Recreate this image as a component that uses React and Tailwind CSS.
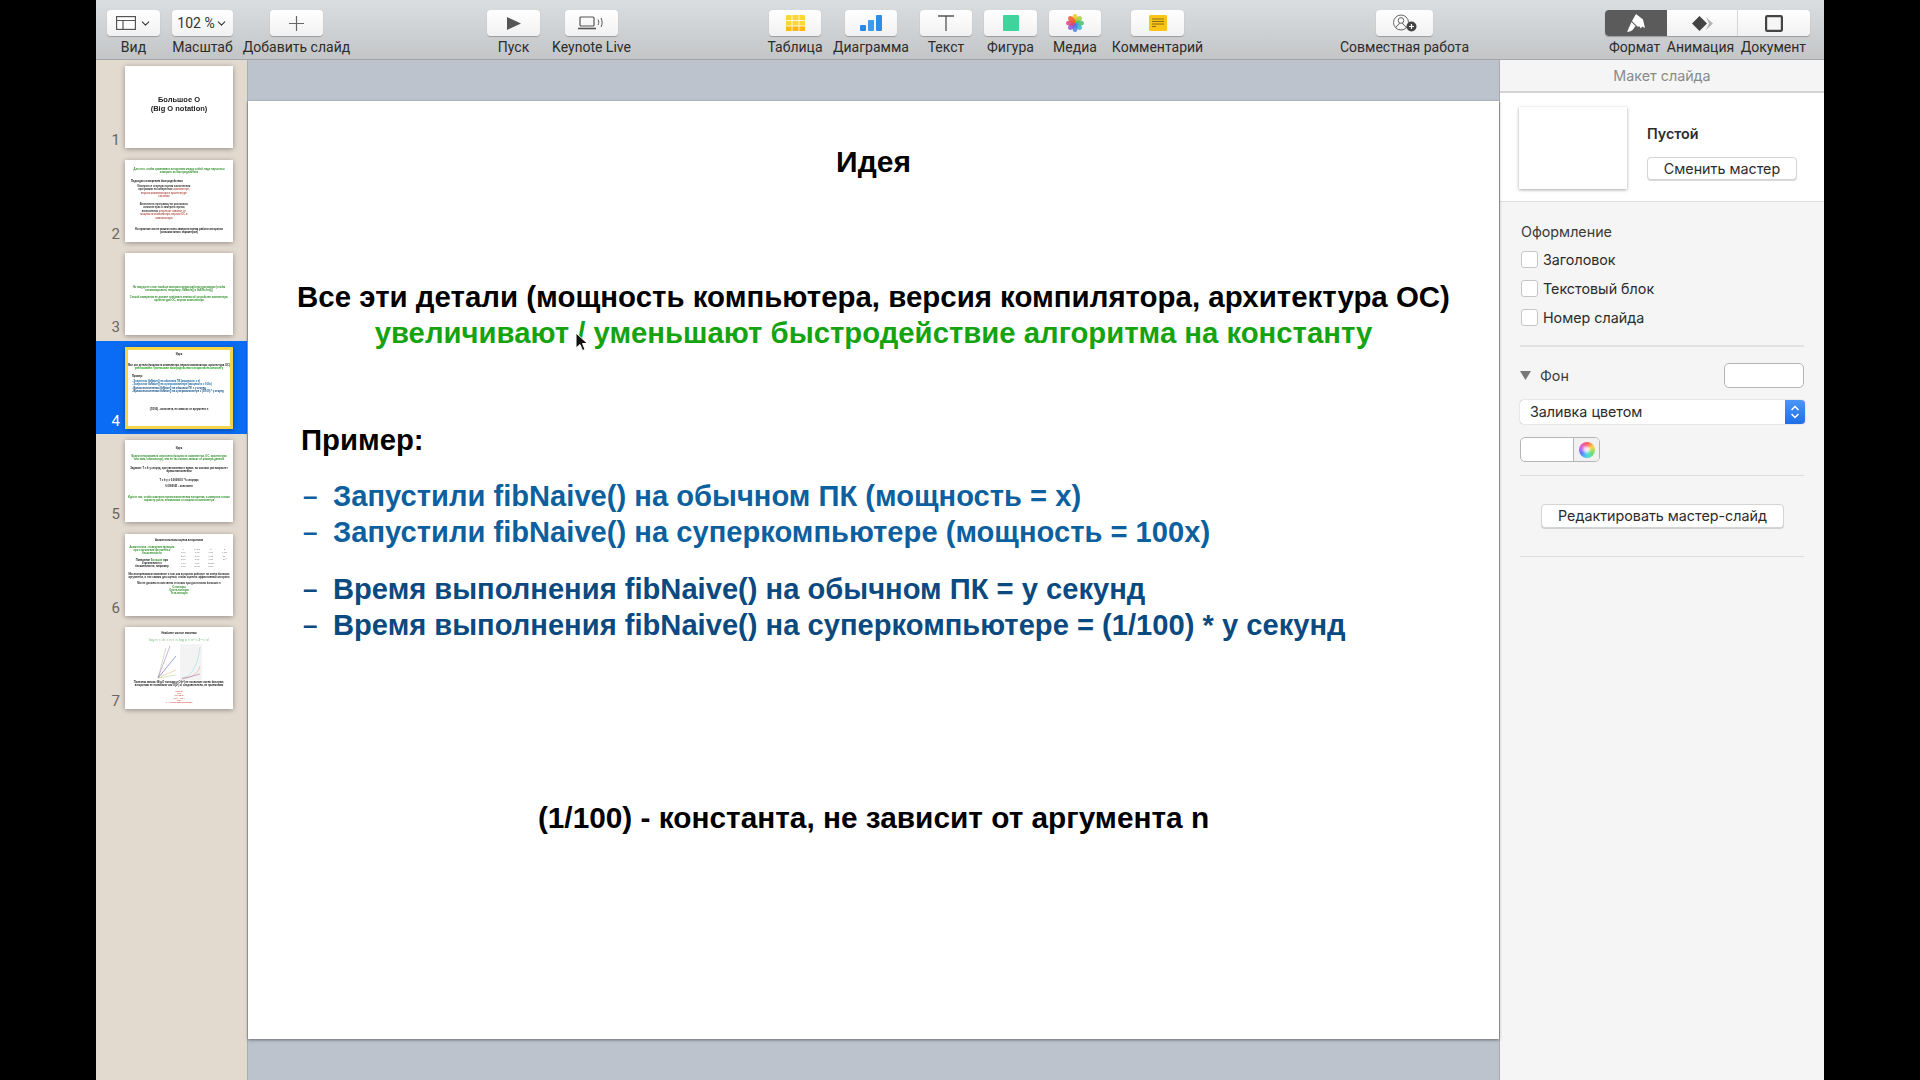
import React from "react";
import { ChevronDown } from "lucide-react";

const uiFont = "font-['Roboto',sans-serif]";

const IconView = () => (
  <svg width="20" height="14" viewBox="0 0 20 14" fill="none" stroke="#555" strokeWidth="1.2">
    <rect x="0.6" y="0.6" width="18.8" height="12.8" fill="#fff" />
    <path d="M0.6 4.5h18.8M7 4.5v8.9" />
  </svg>
);

const IconPlus = () => (
  <svg width="15" height="15" viewBox="0 0 15 15" stroke="#666" strokeWidth="1.2">
    <path d="M7.5 0v15M0 7.5h15" />
  </svg>
);

const IconPlay = () => (
  <svg width="14" height="13" viewBox="0 0 14 13">
    <path d="M0 0l14 6.5L0 13z" fill="#555" />
  </svg>
);

const IconLive = () => (
  <svg width="27" height="14" viewBox="0 0 27 14" fill="none" stroke="#555" strokeWidth="1.2">
    <rect x="2" y="1" width="14" height="9" rx="1" />
    <path d="M0 12.5h18" strokeWidth="1.6" />
    <path d="M20 3.5c1 2 1 3.5 0 5.5M23 2c1.5 3 1.5 6 0 9" strokeWidth="1" />
  </svg>
);

const IconTable = () => (
  <svg width="19" height="16" viewBox="0 0 19 16">
    <rect width="19" height="16" rx="1" fill="#fdd835" />
    <path d="M0 11h19v4a1 1 0 0 1-1 1H1a1 1 0 0 1-1-1z" fill="#fbb80f" />
    <path d="M6 0v16M13 0v16M0 5.5h19M0 11h19" stroke="#fff" strokeWidth="0.8" />
  </svg>
);

const IconChart = () => (
  <svg width="22" height="16" viewBox="0 0 22 16">
    <rect x="0" y="10" width="6" height="6" rx="1" fill="#2b86e6" />
    <rect x="8" y="5" width="6" height="11" rx="1" fill="#3d9bf0" />
    <rect x="16" y="0" width="6" height="16" rx="1" fill="#2b8ee8" />
  </svg>
);

const IconText = () => (
  <svg width="16" height="16" viewBox="0 0 16 16" fill="none" stroke="#555" strokeWidth="1.3">
    <path d="M0 1h16M8 1v15" />
  </svg>
);

const IconShape = () => <div className="w-[16px] h-[16px] rounded-[1px] bg-[#3ed49c]" />;

const IconMedia = () => {
  const petals = ["#f6c21c", "#a5cf3a", "#4cbf6a", "#35b5d0", "#4a7fe0", "#8a55d6", "#e0417a", "#f0582c"];
  return (
    <svg width="18" height="18" viewBox="-9 -9 18 18">
      {petals.map((c, i) => (
        <ellipse key={c} cx="0" cy="-4.5" rx="2.6" ry="4.5" fill={c} opacity="0.85" transform={`rotate(${i * 45})`} />
      ))}
    </svg>
  );
};

const IconComment = () => (
  <svg width="18" height="16" viewBox="0 0 18 16">
    <rect width="18" height="16" rx="1.5" fill="#fcc419" />
    <path d="M3 4h12M3 6.5h12M3 9h12M3 11.5h4" stroke="#8a6d10" strokeWidth="1" />
  </svg>
);

const IconCollab = () => (
  <svg width="24" height="18" viewBox="0 0 24 18" fill="none" stroke="#666" strokeWidth="1">
    <circle cx="8" cy="8.5" r="7.5" />
    <circle cx="8" cy="6.5" r="2.8" />
    <path d="M6.5 9c0 2-3 2-3.5 4.5M9.5 9c0 2 3 2 3.5 4.5" />
    <circle cx="18.5" cy="12.5" r="5" fill="#444" stroke="none" />
    <path d="M18.5 10v5M16 12.5h5" stroke="#fff" strokeWidth="1.2" />
  </svg>
);

const IconFormat = () => (
  <svg width="18" height="18" viewBox="0 0 18 18" fill="#fff">
    <path d="M9 0l7 5.5 2 8.5-3-1.5-1 2-2-2.5-1 1-6-6z" />
    <path d="M4.5 8l4 4-2.5 3.5C5 17 2 18 0 18c1-1 1-3 2-4.5z" />
  </svg>
);

const IconAnimation = () => (
  <svg width="21" height="15" viewBox="0 0 21 15">
    <path d="M7.5 0l7.5 7.5L7.5 15 0 7.5z" fill="#444" />
    <path d="M14 1l7 6.5-7 6.5 3-6.5z" fill="#b5b5b5" />
  </svg>
);

const IconDocument = () => (
  <svg width="18" height="17" viewBox="0 0 18 17" fill="#f6f6f6" stroke="#444" strokeWidth="2.2">
    <rect x="1.1" y="1.1" width="15.8" height="14.8" rx="1.2" />
  </svg>
);

const ToolButton = ({ label, width, margin, children }) => (
  <div className={`flex flex-col items-center ${width} ${margin}`}>
    <div className="w-full h-[26px] rounded-[4px] bg-gradient-to-b from-white to-[#f1f1f1] shadow-[0_1px_1px_rgba(0,0,0,0.25)] flex items-center justify-center">
      {children}
    </div>
    <span className="mt-[3px] text-[14px] leading-[16px] text-[#2c2c2c] whitespace-nowrap">{label}</span>
  </div>
);

const Toolbar = () => (
  <div className={`h-[60px] shrink-0 flex pt-[10px] pl-[11px] bg-gradient-to-b from-[#dbdee0] to-[#c3c5c7] border-b border-[#a3a5a7] ${uiFont}`}>
    <ToolButton label="Вид" width="w-[53px]" margin="ml-0">
      <IconView />
      <ChevronDown size={13} color="#333" strokeWidth={2} className="ml-[3px]" />
    </ToolButton>
    <ToolButton label="Масштаб" width="w-[61px]" margin="ml-[12px]">
      <span className="text-[14px] text-[#333]">102 %</span>
      <ChevronDown size={13} color="#333" strokeWidth={2} />
    </ToolButton>
    <ToolButton label="Добавить слайд" width="w-[53px]" margin="ml-[37px]">
      <IconPlus />
    </ToolButton>
    <ToolButton label="Пуск" width="w-[53px]" margin="ml-[164px]">
      <IconPlay />
    </ToolButton>
    <ToolButton label="Keynote Live" width="w-[53px]" margin="ml-[25px]">
      <IconLive />
    </ToolButton>
    <ToolButton label="Таблица" width="w-[52px]" margin="ml-[151px]">
      <IconTable />
    </ToolButton>
    <ToolButton label="Диаграмма" width="w-[52px]" margin="ml-[24px]">
      <IconChart />
    </ToolButton>
    <ToolButton label="Текст" width="w-[52px]" margin="ml-[23px]">
      <IconText />
    </ToolButton>
    <ToolButton label="Фигура" width="w-[53px]" margin="ml-[12px]">
      <IconShape />
    </ToolButton>
    <ToolButton label="Медиа" width="w-[52px]" margin="ml-[12px]">
      <IconMedia />
    </ToolButton>
    <ToolButton label="Комментарий" width="w-[53px]" margin="ml-[30px]">
      <IconComment />
    </ToolButton>
    <ToolButton label="Совместная работа" width="w-[57px]" margin="ml-[192px]">
      <IconCollab />
    </ToolButton>
    <div className="ml-[172px] flex flex-col">
      <div className="flex h-[26px] w-[205px] rounded-[4px] overflow-hidden bg-gradient-to-b from-white to-[#f1f1f1] shadow-[0_1px_1px_rgba(0,0,0,0.25)]">
        <div className="w-[62px] bg-[#5b5b5b] flex items-center justify-center"><IconFormat /></div>
        <div className="w-[71px] flex items-center justify-center border-r border-[#d5d5d5]"><IconAnimation /></div>
        <div className="w-[72px] flex items-center justify-center"><IconDocument /></div>
      </div>
      <div className="mt-[3px] flex justify-between text-[14px] leading-[16px] text-[#2c2c2c] whitespace-nowrap px-[4px]">
        <span>Формат</span>
        <span>Анимация</span>
        <span>Документ</span>
      </div>
    </div>
  </div>
);

const ThumbText = ({ className = "", children }) => (
  <p className={`text-center font-bold leading-[1.2] ${className}`}>{children}</p>
);

const Thumb1 = () => (
  <div className="h-full flex flex-col justify-center pb-[7px]">
    <ThumbText className="text-[7.5px] text-[#222]">Большое O<br />(Big O notation)</ThumbText>
  </div>
);

const Thumb2 = () => (
  <div className="h-full flex flex-col px-[6px] pt-[8px] text-[2.6px]">
    <ThumbText className="text-[#2f8f2a]">Для того, чтобы сравнивать алгоритмы между собой, надо научиться измерять их быстродействие</ThumbText>
    <p className="mt-[6px] font-bold text-[#111]">Подходы к измерению быстродействия</p>
    <ul className="w-[56%] ml-[6px] mt-[1px] text-center leading-[1.35] font-bold">
      <li className="text-[#333]">Измерить в секундах время выполнения программы на конкретном <span className="text-[#b5574c]">компьютере, версии компилятора и архитектуре системы</span></li>
      <li className="mt-[4px] text-[#333]">Выполнить программу на различных компьютерах и замерить время выполнения <span className="text-[#b5574c]">результат зависит от мощности компьютера, версии ОС и компилятора</span></li>
    </ul>
    <ThumbText className="mt-[8px] text-[#111]">Но практике мы не можем точно замерить время работы алгоритма (слишком много параметров)</ThumbText>
  </div>
);

const Thumb3 = () => (
  <div className="h-full flex flex-col justify-center px-[3px] text-[2.6px] text-[#2f8f2a] font-bold text-center leading-[1.2]">
    <p>Но никуда не стоит вообще замерять время работы программы (чтобы оптимизировать, например, fibNaive() и fibEfficient())</p>
    <p className="mt-[4px]">Способ измерения не должен требовать знания об устройстве компьютера, архитектуры ОС, версии компилятора</p>
  </div>
);

const Thumb4 = () => (
  <div className="h-full flex flex-col text-[2.6px] font-bold pt-[3px]">
    <ThumbText className="text-[#111]">Идея</ThumbText>
    <ThumbText className="mt-[8px] text-[#111]">Все эти детали (мощность компьютера, версия компилятора, архитектура ОС)</ThumbText>
    <ThumbText className="text-[#15a30f]">увеличивают / уменьшают быстродействие алгоритма на константу</ThumbText>
    <p className="ml-[4px] mt-[5px] text-[#111]">Пример:</p>
    <div className="ml-[4px] mt-[1px] text-[#0d5f9e] leading-[1.2]">
      <p>- Запустили fibNaive() на обычном ПК (мощность = x)</p>
      <p>- Запустили fibNaive() на суперкомпьютере (мощность = 100x)</p>
    </div>
    <div className="ml-[4px] mt-[1px] text-[#0b4a80] leading-[1.2]">
      <p>- Время выполнения fibNaive() на обычном ПК = y секунд</p>
      <p>- Время выполнения fibNaive() на суперкомпьютере = (1/100) * y секунд</p>
    </div>
    <ThumbText className="mt-[15px] text-[#111]">(1/100) - константа, не зависит от аргумента n</ThumbText>
  </div>
);

const Thumb5 = () => (
  <div className="h-full flex flex-col text-[2.6px] font-bold px-[2px] pt-[7px] text-center leading-[1.2]">
    <p className="text-[#111]">Идея</p>
    <p className="mt-[5px] text-[#2f8f2a]">Будем игнорировать константы (мощность компьютера, ОС, архитектура системы, компилятор), они не так сильно зависят от размера данных</p>
    <p className="mt-[6px] px-[3px] text-[#111]">Задание: T = k·y секунд, при увеличении n вдвое, во сколько раз возрастет время выполнения</p>
    <p className="mt-[5px] text-[#111]">T = k·y = 0.0000001 * k секунды</p>
    <p className="mt-[3px] text-[#111]">0.0000001 - константа</p>
    <p className="mt-[8px] text-[#2f8f2a]">Идея в том, чтобы измерять время выполнения алгоритма, а измерить только характер роста, независимо от мощности компьютера</p>
  </div>
);

const Thumb6 = () => (
  <div className="h-full flex flex-col text-[2.6px] font-bold pt-[5px] px-[2px] leading-[1.2]">
    <ThumbText className="text-[#111]">Асимптотическая оценка алгоритмов</ThumbText>
    <div className="flex mt-[4px]">
      <div className="w-[48%] text-center">
        <p className="text-[#2f8f2a]">Асимптотика - поведение функции при стремлении аргумента к бесконечности</p>
        <p className="mt-[4px] text-[#111]">Поведение <span className="text-[#2f8f2a]">Большое</span> при<br />стремлении n к<br />бесконечности, например</p>
      </div>
      <div className="flex-1 grid grid-cols-4 gap-x-[1px] text-[2px] text-[#666] font-normal text-center leading-[3.5px] mt-[2px]">
        {["n", "n log n", "n²", "2ⁿ", "1 сек", "1 сек", "1 сек", "1 сек", "1 сек", "1 сек", "1 сек", "10¹⁷", "1 сек", "1 сек", "1 сек", "10³⁰", "1 сек", "1 сек", "17 мин", "-", "1 сек", "20 сек", "12 дн", "-"].map((c, i) => (
          <span key={i}>{c}</span>
        ))}
      </div>
    </div>
    <ThumbText className="mt-[4px] text-[#222]">Мы воспринимаем замечание о том, как алгоритм работает на очень больших аргументах, и тем самым для оценки, чтобы оценить эффективный алгоритм</ThumbText>
    <ThumbText className="mt-[3px] text-[#222]">Мы не должны в константы и только при достаточно больших n</ThumbText>
    <ThumbText className="mt-[1px] text-[#2f8f2a]">O-нотация<br />Омега-нотация<br />Тета-нотация</ThumbText>
  </div>
);

const Thumb7 = () => (
  <div className="h-full flex flex-col text-[2.6px] font-bold pt-[5px] items-center leading-[1.2]">
    <p className="text-[#111]">Наиболее частые значения</p>
    <p className="mt-[3px] text-[3.5px] text-[#9ccc9c]">log n &lt; √n &lt; n &lt; n log n &lt; n² &lt; 2ⁿ &lt; n!</p>
    <svg width="46" height="36" viewBox="0 0 46 36" fill="none" strokeWidth="0.5" className="mt-[2px]">
      <rect x="24" y="0" width="22" height="36" fill="#f3f3f3" stroke="none" />
      <path d="M2 34L10 4" stroke="#a5c08a" />
      <path d="M2 34L14 2" stroke="#a060c0" />
      <path d="M2 34L20 12" stroke="#3c3cb8" />
      <path d="M2 34L20 26" stroke="#d8b070" />
      <path d="M2 34L20 31" stroke="#b0d080" />
      <path d="M26 34C36 33 42 20 44 3" stroke="#8fd8d8" />
      <path d="M26 34C36 34 42 30 44 22" stroke="#e0a060" />
      <path d="M26 35L44 30" stroke="#a060c0" />
    </svg>
    <p className="mt-[1px] px-[3px] text-center text-[#111]">Полезная запись: Big-O нотация и O(n²) не позволяет очень быстрые, алгоритмы не позволяют как O(2ⁿ) и, следовательно, не приемлемы</p>
    <p className="mt-[2px] text-center text-[2px] text-[#d9534f]">O(log n)<br />O(n)<br />O(n log n)<br />O(n²) - O(n³)<br />O(2ⁿ)<br />O = 1.0000000000000000000</p>
  </div>
);

const thumbs = [Thumb1, Thumb2, Thumb3, Thumb4, Thumb5, Thumb6, Thumb7];

const Sidebar = () => (
  <div className="w-[152px] shrink-0 bg-[#e2d9cf] border-r border-[#b0aca6] font-['Liberation_Sans',sans-serif]">
    {thumbs.map((Thumb, i) => {
      const active = i === 3;
      return (
        <div key={i} className={`h-[93.5px] flex items-start pt-[6px] ${active ? "bg-[#0a6cf5]" : ""}`}>
          <span className={`w-[24px] mt-[66px] text-right text-[15px] leading-[16px] font-['Roboto',sans-serif] ${active ? "text-white" : "text-[#666]"}`}>{i + 1}</span>
          <div className={`ml-[5px] w-[108px] h-[82px] bg-white overflow-hidden shadow-[0_1px_5px_rgba(0,0,0,0.35)] ${active ? "border-[3px] border-[#f4d54a]" : ""}`}>
            <div className="h-full blur-[0.3px]">
              <Thumb />
            </div>
          </div>
        </div>
      );
    })}
  </div>
);

const BulletLine = ({ children }) => (
  <p className="flex text-[29.15px]">
    <span className="w-[32px] pl-[2px] text-[26px]">–</span>
    {children}
  </p>
);

const Slide = () => (
  <div className="relative h-[938px] bg-white shadow-[0_1px_3px_rgba(0,0,0,0.45)] font-['Liberation_Sans',sans-serif] font-bold text-[29.3px] leading-[36px] text-black pt-[43px]">
    <h1 className="text-center text-[30px]">Идея</h1>
    <p className="mt-[99px] text-center text-[29.45px]">Все эти детали (мощность компьютера, версия компилятора, архитектура ОС)</p>
    <p className="text-center text-[#15a30f]">увеличивают / уменьшают быстродействие алгоритма на константу</p>
    <p className="mt-[71px] ml-[53px]">Пример:</p>
    <div className="mt-[20px] ml-[53px] text-[#0d5f9e]">
      <BulletLine>Запустили fibNaive() на обычном ПК (мощность = x)</BulletLine>
      <BulletLine>Запустили fibNaive() на суперкомпьютере (мощность = 100x)</BulletLine>
    </div>
    <div className="mt-[21px] ml-[53px] text-[#0b4a80]">
      <BulletLine>Время выполнения fibNaive() на обычном ПК = y секунд</BulletLine>
      <BulletLine>Время выполнения fibNaive() на суперкомпьютере = (1/100) * y секунд</BulletLine>
    </div>
    <p className="mt-[157px] text-center text-[29.8px]">(1/100) - константа, не зависит от аргумента n</p>
    <svg width="14" height="21" viewBox="0 0 14 21" className="absolute left-[327px] top-[231px]">
      <path d="M1 1v15l4-3.5 2.5 6 2.5-1-2.5-6h5z" fill="#111" stroke="#fff" strokeWidth="1" />
    </svg>
  </div>
);

const SmallButton = ({ className = "", children }) => (
  <div className={`h-[23px] rounded-[4px] bg-white border border-[#d4d4d4] shadow-[0_1px_0_rgba(0,0,0,0.15)] text-[14.3px] text-[#2c2c2c] flex items-center justify-center ${className}`}>
    {children}
  </div>
);

const CheckRow = ({ label }) => (
  <div className="flex items-center h-[29px] ml-[21px]">
    <div className="w-[17px] h-[17px] rounded-[3px] bg-white border border-[#c6c6c6]" />
    <span className="ml-[5px] text-[14.3px] text-[#2c2c2c]">{label}</span>
  </div>
);

const Inspector = () => (
  <div className="w-[325px] shrink-0 border-l border-[#a9a9a9] bg-[#f5f5f5] font-['Inter',sans-serif]">
    <div className="h-[33px] border-b-2 border-[#d4d4d4] text-center text-[14.3px] leading-[32px] text-[#8a8a8a]">Макет слайда</div>
    <div className="h-[109px] bg-white border-b border-[#dedede] flex pl-[19px] pt-[14px]">
      <div className="w-[108px] h-[82px] bg-white shadow-[0_1px_3px_rgba(0,0,0,0.35)]" />
      <div className="ml-[20px] pt-[17px]">
        <p className="text-[14.3px] leading-[20px] font-semibold text-[#2c2c2c]">Пустой</p>
        <SmallButton className="mt-[13px] w-[150px]">Сменить мастер</SmallButton>
      </div>
    </div>
    <p className="mt-[20px] ml-[21px] text-[14.3px] leading-[20px] text-[#3a3a3a]">Оформление</p>
    <div className="mt-[3px]">
      <CheckRow label="Заголовок" />
      <CheckRow label="Текстовый блок" />
      <CheckRow label="Номер слайда" />
    </div>
    <div className="mt-[13px] mx-[20px] h-[2px] bg-[#e2e2e2]" />
    <div className="mt-[16px] mx-[20px] flex items-center justify-between h-[25px]">
      <div className="flex items-center">
        <svg width="11" height="9" viewBox="0 0 11 9"><path d="M0 0h11L5.5 9z" fill="#777" /></svg>
        <span className="ml-[9px] text-[14.3px] text-[#3a3a3a]">Фон</span>
      </div>
      <div className="w-[80px] h-[25px] rounded-[5px] bg-white border border-[#b5b5b5]" />
    </div>
    <div className="mt-[12px] ml-[20px] mr-[19px] h-[24px] rounded-[4px] bg-white shadow-[0_0_1px_rgba(0,0,0,0.5)] flex items-center justify-between overflow-hidden text-[14.3px] text-[#2c2c2c]">
      <span className="pl-[10px]">Заливка цветом</span>
      <div className="w-[20px] h-full bg-gradient-to-b from-[#4c96f5] to-[#1f6ee6] flex items-center justify-center">
        <svg width="10" height="16" viewBox="0 0 10 16" fill="none" stroke="#fff" strokeWidth="1.5">
          <path d="M1.5 6L5 2.5 8.5 6M1.5 10L5 13.5 8.5 10" />
        </svg>
      </div>
    </div>
    <div className="mt-[13px] ml-[20px] w-[80px] h-[25px] rounded-[5px] bg-white border border-[#b5b5b5] flex overflow-hidden">
      <div className="w-[53px] border-r border-[#b5b5b5]" />
      <div className="flex-1 bg-[#f1f1f1] flex items-center justify-center">
        <div className="w-[16px] h-[16px] rounded-full bg-[conic-gradient(#ff5a5a,#ffd24a,#6fe06f,#4ad8e0,#5a7cff,#e05ae0,#ff5a5a)] flex items-center justify-center">
          <div className="w-[7px] h-[7px] rounded-full bg-white/80 blur-[1px]" />
        </div>
      </div>
    </div>
    <div className="mt-[13px] mx-[20px] h-[1px] bg-[#dedede]" />
    <SmallButton className="mt-[28px] ml-[41px] w-[243px] h-[24px]">Редактировать мастер-слайд</SmallButton>
    <div className="mt-[28px] mx-[20px] h-[1px] bg-[#dedede]" />
  </div>
);

export default function App() {
  return (
    <div className="w-[1920px] h-[1080px] bg-black px-[96px] overflow-hidden">
      <div className="h-full flex flex-col">
        <Toolbar />
        <div className="flex flex-1 min-h-0">
          <Sidebar />
          <div className="flex-1 bg-[#bcc3cd] pt-[41px]">
            <Slide />
          </div>
          <Inspector />
        </div>
      </div>
    </div>
  );
}
